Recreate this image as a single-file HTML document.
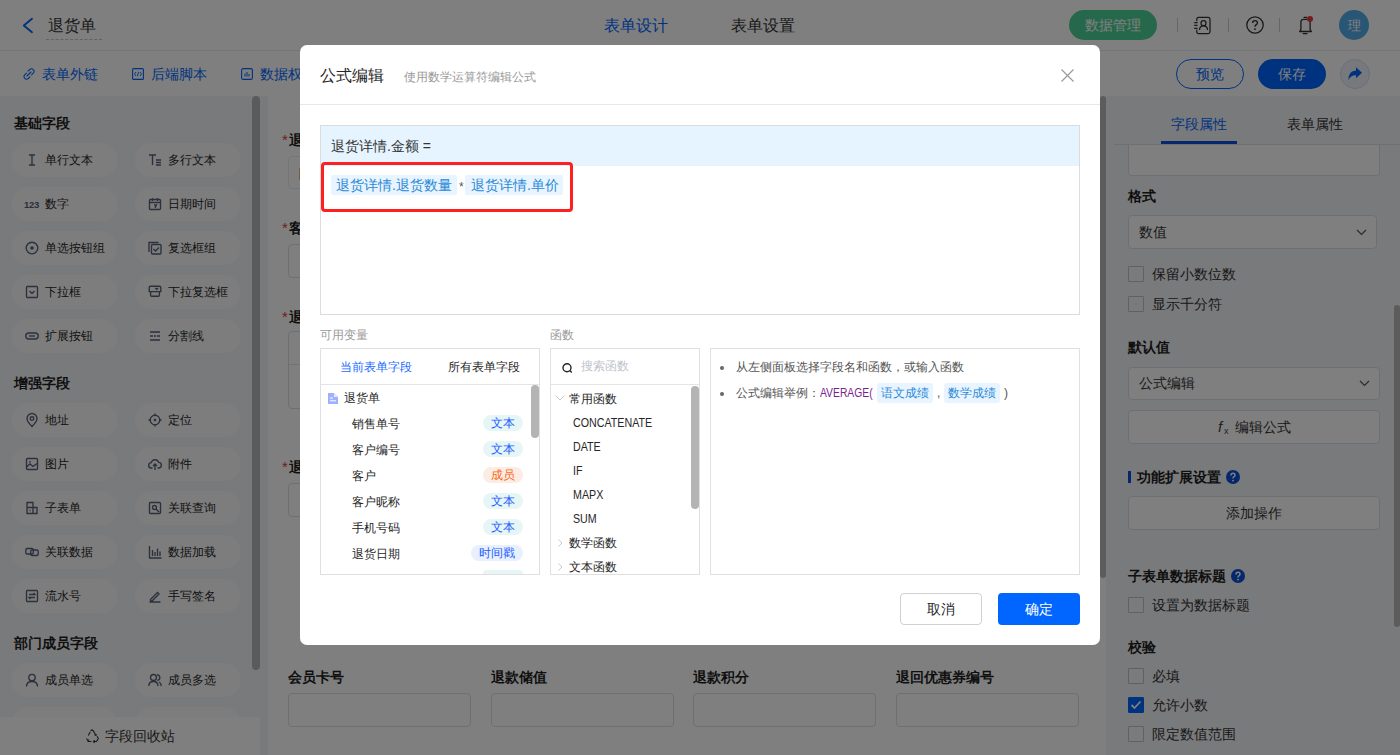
<!DOCTYPE html>
<html><head><meta charset="utf-8">
<style>
*{box-sizing:border-box;margin:0;padding:0}
html,body{width:1400px;height:755px;overflow:hidden;background:#fff}
body{font-family:"Liberation Sans",sans-serif;color:#262626;position:relative}
.a{position:absolute}
.t{position:absolute;white-space:nowrap;line-height:1}
svg{position:absolute;overflow:visible}
/* left panel */
.pill{position:absolute;width:105px;height:34px;border-radius:16px;background:#fafbfc}
.pill .t{left:33px;top:11px;font-size:12px;color:#262626}
.pill svg{left:13px;top:10px}
.sec{position:absolute;left:14px;font-size:14px;font-weight:bold;color:#1f1f1f;line-height:1}
.inp{position:absolute;border:1px solid #dcdfe6;border-radius:4px;background:#fff}
.lbl{position:absolute;font-size:14px;font-weight:bold;color:#1f1f1f;line-height:1;white-space:nowrap}
.star{color:#e03a3a;font-weight:normal;font-size:15px;margin-right:1px}

.cb{position:absolute;left:1128px;width:16px;height:16px;border:1px solid #bfc3cb;border-radius:1px;background:#f5f6f9}
.cbt{position:absolute;left:1152px;font-size:14px;color:#333;line-height:1;white-space:nowrap}
.btn{position:absolute;left:1128px;width:252px;height:34px;border:1px solid #dcdfe6;border-radius:4px;background:#fff}
</style></head><body>

<!-- ===== HEADER ===== -->
<div class="a" style="left:0;top:0;width:1400px;height:51px;background:#fff;border-bottom:1px solid #e8e8e8"></div>
<svg style="left:22px;top:18px" width="12" height="16" viewBox="0 0 12 16"><path d="M10 0.8 L1.8 7.5 L10 14.2" fill="none" stroke="#0066ff" stroke-width="1.9" stroke-linecap="round" stroke-linejoin="round"/></svg>
<div class="t" style="left:48px;top:18px;font-size:16px;color:#333">退货单</div>
<div class="a" style="left:46px;top:39px;width:56px;height:0;border-top:1px dashed #c4c4c4"></div>
<div class="t" style="left:604px;top:18px;font-size:16px;color:#0066ff">表单设计</div>
<div class="t" style="left:731px;top:18px;font-size:16px;color:#333">表单设置</div>
<div class="a" style="left:1069px;top:10px;width:88px;height:30px;border-radius:15px;background:#4dd196"></div>
<div class="t" style="left:1085px;top:18px;font-size:14px;color:#fff">数据管理</div>
<div class="a" style="left:1177px;top:18px;width:1px;height:14px;background:#ccc"></div>
<div class="a" style="left:1228px;top:18px;width:1px;height:14px;background:#ccc"></div>
<div class="a" style="left:1279px;top:18px;width:1px;height:14px;background:#ccc"></div>
<svg style="left:1193px;top:16px" width="18" height="18" viewBox="0 0 18 18"><path d="M3.8 5.2V3.2Q3.8 1.4 5.6 1.4H15.2Q17 1.4 17 3.2V15.8Q17 17.6 15.2 17.6H5.6Q3.8 17.6 3.8 15.8V13.8" fill="none" stroke="#333" stroke-width="1.25"/><path d="M1.2 6.5h3.4M1.2 9.4h3.4M1.2 12.4h3.4" stroke="#333" stroke-width="1.25"/><circle cx="10.5" cy="7.2" r="2.5" fill="none" stroke="#333" stroke-width="1.25"/><path d="M6.5 14Q6.5 9.8 10.5 9.8Q14.5 9.8 14.5 14" fill="none" stroke="#333" stroke-width="1.25"/></svg>
<svg style="left:1246px;top:16px" width="18" height="18" viewBox="0 0 18 18"><circle cx="9" cy="9" r="8.2" fill="none" stroke="#333" stroke-width="1.3"/><path d="M6.6 7 Q6.6 4.6 9 4.6 Q11.4 4.6 11.4 6.8 Q11.4 8.3 9.8 9 Q9 9.4 9 10.8" fill="none" stroke="#333" stroke-width="1.4"/><circle cx="9" cy="13.2" r="0.9" fill="#333"/></svg>
<svg style="left:1298px;top:16px" width="16" height="19" viewBox="0 0 16 19"><path d="M1.6 15.5L2.9 13.6V6Q2.9 3.3 5.6 3.3H9.4Q12.1 3.3 12.1 6V13.6L13.4 15.5Z" fill="none" stroke="#333" stroke-width="1.3" stroke-linejoin="round"/><path d="M6 1.3H8.6M5.2 17.6H9" stroke="#333" stroke-width="1.3" stroke-linecap="round"/><circle cx="12" cy="3" r="3" fill="#e83a3a"/></svg>
<div class="a" style="left:1339px;top:10px;width:30px;height:30px;border-radius:50%;background:#52ace8"></div>
<div class="t" style="left:1348px;top:19px;font-size:13px;color:#fff">理</div>

<!-- ===== TOOLBAR ===== -->
<svg style="left:23px;top:68px" width="12" height="12" viewBox="0 0 12 12"><path d="M5 3.2 L6.6 1.6 Q8.4 -0.2 10.2 1.6 Q12 3.4 10.2 5.2 L8.6 6.8 M7 8.8 L5.4 10.4 Q3.6 12.2 1.8 10.4 Q0 8.6 1.8 6.8 L3.4 5.2 M4 8 L8 4" fill="none" stroke="#0066ff" stroke-width="1.1" stroke-linecap="round"/></svg>
<div class="t" style="left:42px;top:67px;font-size:14px;color:#0066ff">表单外链</div>
<svg style="left:132px;top:68px" width="12" height="12" viewBox="0 0 12 12"><rect x="0.6" y="0.6" width="10.8" height="10.8" rx="1" fill="none" stroke="#0066ff" stroke-width="1.1"/><path d="M4 4 L2.5 6 L4 8 M8 4 L9.5 6 L8 8 M6.6 3.8 L5.4 8.2" fill="none" stroke="#0066ff" stroke-width="0.9"/></svg>
<div class="t" style="left:151px;top:67px;font-size:14px;color:#0066ff">后端脚本</div>
<svg style="left:241px;top:68px" width="12" height="12" viewBox="0 0 12 12"><rect x="0.6" y="0.6" width="10.8" height="10.8" rx="1.5" fill="none" stroke="#0066ff" stroke-width="1.1"/><path d="M4 5.5v3M6 4v4.5M8 6v2.5" stroke="#0066ff" stroke-width="1"/></svg>
<div class="t" style="left:260px;top:67px;font-size:14px;color:#0066ff">数据权限</div>
<div class="a" style="left:1176px;top:59px;width:68px;height:30px;border-radius:15px;border:1px solid #0066ff;background:#fff"></div>
<div class="t" style="left:1196px;top:67px;font-size:14px;color:#0066ff">预览</div>
<div class="a" style="left:1258px;top:59px;width:68px;height:30px;border-radius:15px;background:#0066ff"></div>
<div class="t" style="left:1278px;top:67px;font-size:14px;color:#fff">保存</div>
<div class="a" style="left:1340px;top:59px;width:30px;height:30px;border-radius:50%;border:1px solid #d6def0;background:#eef2fa"></div>
<svg style="left:1347px;top:67px" width="16" height="14" viewBox="0 0 16 14"><path d="M1.2 13.2 Q1.6 3.6 9 3.4 V0.3 L15 5.8 L9 11.2 V8.2 Q3.8 8 1.2 13.2Z" fill="#0066ff"/></svg>

<!-- ===== LEFT PANEL ===== -->
<div class="a" style="left:0;top:96px;width:268px;height:659px;background:#f3f4f7"></div>
<div id="leftpanel"><div class="sec" style="top:116px">基础字段</div>
<div class="sec" style="top:376px">增强字段</div>
<div class="sec" style="top:636px">部门成员字段</div>
<div class="pill" style="left:12px;top:143px"><svg width="14" height="14" viewBox="0 0 14 14"><path d="M4 2h6M4 12h6M7 2v10" fill="none" stroke="#566074" stroke-width="1.35" stroke-width="1.5"/></svg><div class="t">单行文本</div></div>
<div class="pill" style="left:135px;top:143px"><svg width="14" height="14" viewBox="0 0 14 14"><path d="M1 2h7M4.5 2v10M8 7h5M8 9.5h5M8 12h5" fill="none" stroke="#566074" stroke-width="1.35" stroke-width="1.3"/></svg><div class="t">多行文本</div></div>
<div class="pill" style="left:12px;top:187px"><div class="t" style="left:12px;top:13px;font-size:9.5px;font-weight:bold;color:#566074;letter-spacing:-0.3px">123</div><div class="t">数字</div></div>
<div class="pill" style="left:135px;top:187px"><svg width="14" height="14" viewBox="0 0 14 14"><rect x="1.5" y="2.5" width="11" height="10" rx="1" fill="none" stroke="#566074" stroke-width="1.35"/><path d="M1.5 5.5h11M4.5 1v3M9.5 1v3M6 8h2.5L7 11" fill="none" stroke="#566074" stroke-width="1.35"/></svg><div class="t">日期时间</div></div>
<div class="pill" style="left:12px;top:231px"><svg width="14" height="14" viewBox="0 0 14 14"><circle cx="7" cy="7" r="5.8" fill="none" stroke="#566074" stroke-width="1.35"/><circle cx="7" cy="7" r="1.8" fill="#566074"/></svg><div class="t">单选按钮组</div></div>
<div class="pill" style="left:135px;top:231px"><svg width="14" height="14" viewBox="0 0 14 14"><path d="M1 11V1.5h9.5" fill="none" stroke="#566074" stroke-width="1.35"/><rect x="3.5" y="3.5" width="9.5" height="9.5" rx="1" fill="none" stroke="#566074" stroke-width="1.35"/><path d="M5.5 8l2 2 3.5-3.5" fill="none" stroke="#566074" stroke-width="1.35"/></svg><div class="t">复选框组</div></div>
<div class="pill" style="left:12px;top:275px"><svg width="14" height="14" viewBox="0 0 14 14"><rect x="1.5" y="1.5" width="11" height="11" rx="1" fill="none" stroke="#566074" stroke-width="1.35"/><path d="M4.5 6l2.5 2.5L9.5 6" fill="none" stroke="#566074" stroke-width="1.35"/></svg><div class="t">下拉框</div></div>
<div class="pill" style="left:135px;top:275px"><svg width="14" height="14" viewBox="0 0 14 14"><path d="M1.2 6.6V2.5Q1.2 1.2 2.5 1.2H11.5Q12.8 1.2 12.8 2.5V6.6ZM2.6 6.6V10.2Q2.6 11.2 3.6 11.2H10.4Q11.4 11.2 11.4 10.2V6.6M7.3 3l1.4 1.3L10.1 3" fill="none" stroke="#566074" stroke-width="1.35"/></svg><div class="t">下拉复选框</div></div>
<div class="pill" style="left:12px;top:319px"><svg width="14" height="14" viewBox="0 0 14 14"><rect x="0.8" y="4" width="12.4" height="6" rx="3" fill="none" stroke="#566074" stroke-width="1.35" stroke-width="1.4"/><path d="M4 7h6" fill="none" stroke="#566074" stroke-width="1.35"/></svg><div class="t">扩展按钮</div></div>
<div class="pill" style="left:135px;top:319px"><svg width="14" height="14" viewBox="0 0 14 14"><path d="M2 3h10M2 7h3M6 7h2M9 7h3M2 11h10" fill="none" stroke="#566074" stroke-width="1.35"/></svg><div class="t">分割线</div></div>
<div class="pill" style="left:12px;top:403px"><svg width="14" height="14" viewBox="0 0 14 14"><path d="M7 13.5Q2 8.5 2 5.5A5 5 0 0 1 12 5.5Q12 8.5 7 13.5Z" fill="none" stroke="#566074" stroke-width="1.35"/><circle cx="7" cy="5.5" r="1.8" fill="none" stroke="#566074" stroke-width="1.35"/></svg><div class="t">地址</div></div>
<div class="pill" style="left:135px;top:403px"><svg width="14" height="14" viewBox="0 0 14 14"><circle cx="7" cy="7" r="4.8" fill="none" stroke="#566074" stroke-width="1.35"/><circle cx="7" cy="7" r="1.3" fill="#566074"/><path d="M7 0.5v2.5M7 11v2.5M0.5 7h2.5M11 7h2.5" fill="none" stroke="#566074" stroke-width="1.35"/></svg><div class="t">定位</div></div>
<div class="pill" style="left:12px;top:447px"><svg width="14" height="14" viewBox="0 0 14 14"><rect x="1.5" y="1.5" width="11" height="11" rx="1" fill="none" stroke="#566074" stroke-width="1.35"/><path d="M1.5 10l3.5-3 3 2.5 4-3" fill="none" stroke="#566074" stroke-width="1.35"/><circle cx="5" cy="4.8" r="0.9" fill="#566074"/></svg><div class="t">图片</div></div>
<div class="pill" style="left:135px;top:447px"><svg width="14" height="14" viewBox="0 0 14 14"><path d="M4.5 11H3.5A2.7 2.7 0 0 1 3.3 5.6A3.8 3.8 0 0 1 10.6 5.4A2.8 2.8 0 0 1 10.5 11H9.5M7 7v6M5 9l2-2 2 2" fill="none" stroke="#566074" stroke-width="1.35"/></svg><div class="t">附件</div></div>
<div class="pill" style="left:12px;top:491px"><svg width="14" height="14" viewBox="0 0 14 14"><path d="M2 1.5h6v11H2zM8 6.5h4v6H8M2 6.5h6M4.5 9.5h1" fill="none" stroke="#566074" stroke-width="1.35"/></svg><div class="t">子表单</div></div>
<div class="pill" style="left:135px;top:491px"><svg width="14" height="14" viewBox="0 0 14 14"><rect x="1.5" y="1.5" width="11" height="11" rx="1" fill="none" stroke="#566074" stroke-width="1.35"/><circle cx="6.5" cy="6.5" r="2" fill="none" stroke="#566074" stroke-width="1.35"/><path d="M8 8l3 3" fill="none" stroke="#566074" stroke-width="1.35"/></svg><div class="t">关联查询</div></div>
<div class="pill" style="left:12px;top:535px"><svg width="14" height="14" viewBox="0 0 14 14"><rect x="0.8" y="3.5" width="7.5" height="5.5" rx="1.5" fill="none" stroke="#566074" stroke-width="1.35"/><rect x="5.7" y="5" width="7.5" height="5.5" rx="1.5" fill="none" stroke="#566074" stroke-width="1.35"/></svg><div class="t">关联数据</div></div>
<div class="pill" style="left:135px;top:535px"><svg width="14" height="14" viewBox="0 0 14 14"><path d="M1.5 1v12h12M4.5 5v6M7 7v4M9.5 3.5v7.5M12 6.5v4.5" fill="none" stroke="#566074" stroke-width="1.35"/></svg><div class="t">数据加载</div></div>
<div class="pill" style="left:12px;top:579px"><svg width="14" height="14" viewBox="0 0 14 14"><rect x="1.5" y="1.5" width="11" height="11" rx="1" fill="none" stroke="#566074" stroke-width="1.35"/><path d="M4 5.5h6L8.5 4M10 8.5H4l1.5 1.5" fill="none" stroke="#566074" stroke-width="1.35"/></svg><div class="t">流水号</div></div>
<div class="pill" style="left:135px;top:579px"><svg width="14" height="14" viewBox="0 0 14 14"><path d="M2.5 10.5L9.5 3.5l1.5 1.5-7 7H2.5z M1.5 13h11" fill="none" stroke="#566074" stroke-width="1.35"/></svg><div class="t">手写签名</div></div>
<div class="pill" style="left:12px;top:663px"><svg width="14" height="14" viewBox="0 0 14 14"><circle cx="7" cy="4.5" r="3.2" fill="none" stroke="#566074" stroke-width="1.35" stroke-width="1.3"/><path d="M1.5 13.5Q1.5 8.5 7 8.5Q12.5 8.5 12.5 13.5" fill="none" stroke="#566074" stroke-width="1.35" stroke-width="1.3"/></svg><div class="t">成员单选</div></div>
<div class="pill" style="left:135px;top:663px"><svg width="14" height="14" viewBox="0 0 14 14"><circle cx="5.5" cy="4.5" r="3" fill="none" stroke="#566074" stroke-width="1.35" stroke-width="1.3"/><path d="M0.8 13Q0.8 8.5 5.5 8.5Q10 8.5 10 13M9 1.8A2.7 2.7 0 0 1 9.2 7.3M11 9Q13.2 10 13.2 13" fill="none" stroke="#566074" stroke-width="1.35" stroke-width="1.3"/></svg><div class="t">成员多选</div></div>
<div class="pill" style="left:12px;top:707px"><svg width="14" height="14" viewBox="0 0 14 14"><circle cx="7" cy="4.5" r="3.2" fill="none" stroke="#566074" stroke-width="1.35" stroke-width="1.3"/><path d="M1.5 13.5Q1.5 8.5 7 8.5Q12.5 8.5 12.5 13.5" fill="none" stroke="#566074" stroke-width="1.35" stroke-width="1.3"/></svg><div class="t">部门单选</div></div>
<div class="pill" style="left:135px;top:707px"><svg width="14" height="14" viewBox="0 0 14 14"><circle cx="5.5" cy="4.5" r="3" fill="none" stroke="#566074" stroke-width="1.35" stroke-width="1.3"/><path d="M0.8 13Q0.8 8.5 5.5 8.5Q10 8.5 10 13M9 1.8A2.7 2.7 0 0 1 9.2 7.3M11 9Q13.2 10 13.2 13" fill="none" stroke="#566074" stroke-width="1.35" stroke-width="1.3"/></svg><div class="t">部门多选</div></div>
<div class="a" style="left:252px;top:96px;width:8px;height:574px;border-radius:4px;background:#b6b6b6"></div>
<div class="a" style="left:0;top:717px;width:260px;height:38px;background:#fff"></div>
<svg style="left:85px;top:729px" width="14" height="14" viewBox="0 0 14 14"><path d="M5.5 2.2L7 0.8l1.5 1.4 2.3 4M11.8 5.5l-1 .8-1.3-.5M3.2 6.5l2-3.6M1.5 9.5l2 3h3M4 10.5L2.5 12.5M9 12.5h2.5l1.8-3-1.3-2.2M9.5 11l-1 1.5 1 1.3" fill="none" stroke="#333" stroke-width="1.1"/></svg>
<div class="t" style="left:105px;top:729px;font-size:14px;color:#333">字段回收站</div></div><!--/left-->

<!-- ===== CENTER CANVAS ===== -->
<div id="canvas"><div class="a" style="left:1100px;top:96px;width:6px;height:482px;border-radius:3px;background:#b9b9b9"></div>
<div class="lbl" style="left:282px;top:132px"><span class="star">*</span>退货详情</div>
<div class="inp" style="left:288px;top:156px;width:300px;height:33px;border-color:#ececec"></div>
<div class="a" style="left:299px;top:168px;width:1px;height:12px;background:#f5b070"></div>
<div class="lbl" style="left:282px;top:220px"><span class="star">*</span>客户</div>
<div class="inp" style="left:288px;top:244px;width:300px;height:34px"></div>
<div class="lbl" style="left:282px;top:309px"><span class="star">*</span>退货明细</div>
<div class="inp" style="left:288px;top:331px;width:300px;height:78px"></div>
<div class="a" style="left:289px;top:364px;width:300px;height:1px;background:#e4e6eb"></div>
<div class="lbl" style="left:282px;top:459px"><span class="star">*</span>退款方式</div>
<div class="inp" style="left:288px;top:483px;width:300px;height:34px"></div>
<div class="lbl" style="left:288px;top:670px">会员卡号</div>
<div class="inp" style="left:288px;top:693px;width:183px;height:34px"></div>
<div class="lbl" style="left:491px;top:670px">退款储值</div>
<div class="inp" style="left:491px;top:693px;width:183px;height:34px"></div>
<div class="lbl" style="left:693px;top:670px">退款积分</div>
<div class="inp" style="left:693px;top:693px;width:183px;height:34px"></div>
<div class="lbl" style="left:896px;top:670px">退回优惠券编号</div>
<div class="inp" style="left:896px;top:693px;width:183px;height:34px"></div></div><!--/canvas-->

<!-- ===== RIGHT PANEL ===== -->
<div class="a" style="left:1106px;top:96px;width:294px;height:659px;background:#f3f4f7"></div>
<div id="rightpanel"><div class="t" style="left:1171px;top:117px;font-size:14px;color:#0066ff">字段属性</div>
<div class="t" style="left:1287px;top:117px;font-size:14px;color:#333">表单属性</div>
<div class="inp" style="left:1128px;top:145px;width:252px;height:31px;border-top:none;border-radius:0 0 4px 4px;background:#fff"></div>
<div class="a" style="left:1114px;top:144px;width:286px;height:1px;background:#dfe1e6"></div>
<div class="a" style="left:1161px;top:141px;width:76px;height:3px;background:#0a4fd6"></div>
<div class="lbl" style="left:1128px;top:189px">格式</div>
<div class="inp" style="left:1128px;top:215px;width:249px;height:34px;background:#fff"></div>
<div class="t" style="left:1139px;top:225px;font-size:14px;color:#333">数值</div>
<svg style="left:1356px;top:229px" width="11" height="7" viewBox="0 0 11 7"><path d="M1 1l4.5 4.5L10 1" fill="none" stroke="#555" stroke-width="1.2"/></svg>
<div class="cb" style="top:266px"></div>
<div class="cbt" style="top:267px">保留小数位数</div>
<div class="cb" style="top:296px"></div>
<div class="cbt" style="top:297px">显示千分符</div>
<div class="cb" style="top:597px"></div>
<div class="cbt" style="top:598px">设置为数据标题</div>
<div class="cb" style="top:668px"></div>
<div class="cbt" style="top:669px">必填</div>
<div class="cb" style="top:697px;background:#0066ff;border-color:#0066ff"></div>
<svg style="left:1130px;top:700px" width="12" height="10" viewBox="0 0 12 10"><path d="M1.5 5l3 3 6-6.5" fill="none" stroke="#fff" stroke-width="1.8"/></svg>
<div class="cbt" style="top:698px">允许小数</div>
<div class="cb" style="top:726px"></div>
<div class="cbt" style="top:727px">限定数值范围</div>
<div class="lbl" style="left:1128px;top:340px">默认值</div>
<div class="inp" style="left:1128px;top:367px;width:252px;height:33px;background:#fff"></div>
<div class="t" style="left:1139px;top:376px;font-size:14px;color:#333">公式编辑</div>
<svg style="left:1359px;top:380px" width="11" height="7" viewBox="0 0 11 7"><path d="M1 1l4.5 4.5L10 1" fill="none" stroke="#555" stroke-width="1.2"/></svg>
<div class="btn" style="top:410px"></div>
<div class="t" style="left:1218px;top:419px;font-size:15px;color:#444;font-family:'Liberation Sans',sans-serif;font-style:italic">f</div>
<div class="t" style="left:1224px;top:427px;font-size:9px;color:#444">x</div>
<div class="t" style="left:1235px;top:420px;font-size:14px;color:#333">编辑公式</div>
<div class="a" style="left:1128px;top:471px;width:3px;height:12px;background:#0a4fd6"></div>
<div class="lbl" style="left:1137px;top:470px">功能扩展设置</div>
<svg style="left:1226px;top:470px" width="14" height="14" viewBox="0 0 14 14"><circle cx="7" cy="7" r="7" fill="#0a4fd6"/><path d="M5 5.5Q5 3.3 7 3.3Q9 3.3 9 5.2Q9 6.3 7.8 6.9Q7 7.3 7 8.5" fill="none" stroke="#fff" stroke-width="1.5"/><circle cx="7" cy="10.6" r="0.95" fill="#fff"/></svg>
<div class="btn" style="top:496px"></div>
<div class="t" style="left:1226px;top:506px;font-size:14px;color:#333">添加操作</div>
<div class="lbl" style="left:1128px;top:569px">子表单数据标题</div>
<svg style="left:1231px;top:569px" width="14" height="14" viewBox="0 0 14 14"><circle cx="7" cy="7" r="7" fill="#0a4fd6"/><path d="M5 5.5Q5 3.3 7 3.3Q9 3.3 9 5.2Q9 6.3 7.8 6.9Q7 7.3 7 8.5" fill="none" stroke="#fff" stroke-width="1.5"/><circle cx="7" cy="10.6" r="0.95" fill="#fff"/></svg>
<div class="lbl" style="left:1128px;top:640px">校验</div>
<div class="a" style="left:1394px;top:305px;width:6px;height:322px;border-radius:3px;background:#b9b9b9"></div></div><!--/right-->

<!-- ===== OVERLAY ===== -->
<div class="a" style="left:0;top:0;width:1400px;height:755px;background:rgba(0,0,0,0.5)"></div>

<!-- ===== MODAL ===== -->
<div class="a" style="left:300px;top:45px;width:800px;height:600px;background:#fff;border-radius:7px"></div>
<div id="modal"><div class="t" style="left:320px;top:68px;font-size:16px;color:#262626">公式编辑</div>
<div class="t" style="left:404px;top:71px;font-size:12px;color:#999">使用数学运算符编辑公式</div>
<svg style="left:1061px;top:69px" width="13" height="13" viewBox="0 0 13 13"><path d="M0.5 0.5L12.5 12.5M12.5 0.5L0.5 12.5" stroke="#999" stroke-width="1.2"/></svg>
<div class="a" style="left:300px;top:104px;width:800px;height:1px;background:#e8e8e8"></div>
<div class="a" style="left:320px;top:125px;width:760px;height:190px;border:1px solid #dcdcdc;background:#fff"></div>
<div class="a" style="left:321px;top:126px;width:758px;height:40px;background:#e5f4ff"></div>
<div class="t" style="left:331px;top:139px;font-size:14px;color:#333">退货详情.金额 =</div>
<div class="a" style="left:331px;top:175px;width:126px;height:20px;border-radius:2px;background:#e8f4ff"></div>
<div class="t" style="left:336px;top:178px;font-size:14px;color:#2b8ad6">退货详情.退货数量</div>
<div class="t" style="left:459px;top:181px;font-size:12px;color:#555">*</div>
<div class="a" style="left:465px;top:175px;width:98px;height:20px;border-radius:2px;background:#e8f4ff"></div>
<div class="t" style="left:471px;top:178px;font-size:14px;color:#2b8ad6">退货详情.单价</div>
<div class="a" style="left:321px;top:162px;width:252px;height:50px;border:3px solid #ff1f1f;border-radius:4px"></div>
<div class="t" style="left:320px;top:329px;font-size:12px;color:#999">可用变量</div>
<div class="t" style="left:550px;top:329px;font-size:12px;color:#999">函数</div>
<div class="a" style="left:320px;top:348px;width:220px;height:227px;border:1px solid #e0e0e0;overflow:hidden" id="vp"></div>
<div class="a" style="left:321px;top:384px;width:218px;height:1px;background:#e4e4e4"></div>
<div class="t" style="left:340px;top:361px;font-size:12px;color:#1a6cff">当前表单字段</div>
<div class="t" style="left:448px;top:361px;font-size:12px;color:#262626">所有表单字段</div>
<svg style="left:328px;top:393px" width="10" height="11" viewBox="0 0 10 11"><path d="M0 0h6L10 4V11H0z" fill="#9fb0ff"/><path d="M6 0V4H10" fill="#e4e9ff"/><path d="M2 5h3M2 7.8h6" stroke="#fff" stroke-width="1"/></svg>
<div class="t" style="left:344px;top:392px;font-size:12px;color:#262626">退货单</div>
<div class="t" style="left:352px;top:418px;font-size:12px;color:#262626">销售单号</div>
<div class="a" style="left:483px;top:415px;width:40px;height:16px;border-radius:8px;background:#e6f6f6"></div>
<div class="t" style="left:491px;top:417px;font-size:12px;color:#1f5cff">文本</div>
<div class="t" style="left:352px;top:444px;font-size:12px;color:#262626">客户编号</div>
<div class="a" style="left:483px;top:441px;width:40px;height:16px;border-radius:8px;background:#e6f6f6"></div>
<div class="t" style="left:491px;top:443px;font-size:12px;color:#1f5cff">文本</div>
<div class="t" style="left:352px;top:470px;font-size:12px;color:#262626">客户</div>
<div class="a" style="left:483px;top:467px;width:40px;height:16px;border-radius:8px;background:#fdece3"></div>
<div class="t" style="left:491px;top:469px;font-size:12px;color:#f56a1a">成员</div>
<div class="t" style="left:352px;top:496px;font-size:12px;color:#262626">客户昵称</div>
<div class="a" style="left:483px;top:493px;width:40px;height:16px;border-radius:8px;background:#e6f6f6"></div>
<div class="t" style="left:491px;top:495px;font-size:12px;color:#1f5cff">文本</div>
<div class="t" style="left:352px;top:522px;font-size:12px;color:#262626">手机号码</div>
<div class="a" style="left:483px;top:519px;width:40px;height:16px;border-radius:8px;background:#e6f6f6"></div>
<div class="t" style="left:491px;top:521px;font-size:12px;color:#1f5cff">文本</div>
<div class="t" style="left:352px;top:548px;font-size:12px;color:#262626">退货日期</div>
<div class="a" style="left:471px;top:545px;width:52px;height:16px;border-radius:8px;background:#e8f0fe"></div>
<div class="t" style="left:479px;top:547px;font-size:12px;color:#1f5cff">时间戳</div>
<div class="a" style="left:483px;top:570px;width:40px;height:4px;border-radius:8px 8px 0 0;background:#e6f6f6"></div>
<div class="a" style="left:531px;top:385px;width:8px;height:53px;border-radius:4px;background:#b4b4b4"></div>
<div class="a" style="left:550px;top:348px;width:150px;height:227px;border:1px solid #e0e0e0"></div>
<div class="a" style="left:551px;top:384px;width:148px;height:1px;background:#e4e4e4"></div>
<svg style="left:562px;top:363px" width="11" height="10" viewBox="0 0 11 10"><circle cx="5" cy="4.8" r="4" fill="none" stroke="#262626" stroke-width="1.4"/><path d="M7.8 7.6L9.8 9.6" stroke="#262626" stroke-width="1.4"/></svg>
<div class="t" style="left:581px;top:360px;font-size:12px;color:#c0c4cc">搜索函数</div>
<svg style="left:555px;top:395px" width="10" height="6" viewBox="0 0 10 6"><path d="M0.5 0.5L5 5L9.5 0.5" fill="none" stroke="#c8c8d4" stroke-width="1"/></svg>
<div class="t" style="left:569px;top:393px;font-size:12px;color:#262626">常用函数</div>
<div class="t" style="left:573px;top:417px;font-size:12px;color:#262626;transform:scaleX(0.89);transform-origin:0 0">CONCATENATE</div>
<div class="t" style="left:573px;top:441px;font-size:12px;color:#262626;transform:scaleX(0.89);transform-origin:0 0">DATE</div>
<div class="t" style="left:573px;top:465px;font-size:12px;color:#262626;transform:scaleX(0.89);transform-origin:0 0">IF</div>
<div class="t" style="left:573px;top:489px;font-size:12px;color:#262626;transform:scaleX(0.89);transform-origin:0 0">MAPX</div>
<div class="t" style="left:573px;top:513px;font-size:12px;color:#262626;transform:scaleX(0.89);transform-origin:0 0">SUM</div>
<svg style="left:558px;top:539px" width="5" height="8" viewBox="0 0 5 8"><path d="M0.5 0.5L4 4L0.5 7.5" fill="none" stroke="#c8c8d4" stroke-width="1"/></svg>
<div class="t" style="left:569px;top:537px;font-size:12px;color:#262626;height:37px;overflow:hidden">数学函数</div>
<svg style="left:558px;top:563px" width="5" height="8" viewBox="0 0 5 8"><path d="M0.5 0.5L4 4L0.5 7.5" fill="none" stroke="#c8c8d4" stroke-width="1"/></svg>
<div class="t" style="left:569px;top:561px;font-size:12px;color:#262626;height:13px;overflow:hidden">文本函数</div>
<div class="a" style="left:691px;top:386px;width:8px;height:123px;border-radius:4px;background:#b4b4b4"></div>
<div class="a" style="left:710px;top:348px;width:370px;height:227px;border:1px solid #e0e0e0"></div>
<div class="a" style="left:720px;top:366px;width:4px;height:4px;border-radius:2px;background:#666"></div>
<div class="t" style="left:736px;top:361px;font-size:12px;color:#555">从左侧面板选择字段名和函数，或输入函数</div>
<div class="a" style="left:720px;top:392px;width:4px;height:4px;border-radius:2px;background:#666"></div>
<div class="t" style="left:736px;top:387px;font-size:12px;color:#555">公式编辑举例：</div>
<div class="t" style="left:820px;top:387px;font-size:12px;color:#7a1f8f;transform:scaleX(0.86);transform-origin:0 0">AVERAGE(</div>
<div class="a" style="left:877px;top:383px;width:56px;height:20px;border-radius:3px;background:#e8f4ff"></div>
<div class="t" style="left:881px;top:387px;font-size:12px;color:#2b8ad6">语文成绩</div>
<div class="t" style="left:937px;top:387px;font-size:12px;color:#555">,</div>
<div class="a" style="left:944px;top:383px;width:56px;height:20px;border-radius:3px;background:#e8f4ff"></div>
<div class="t" style="left:948px;top:387px;font-size:12px;color:#2b8ad6">数学成绩</div>
<div class="t" style="left:1004px;top:387px;font-size:12px;color:#555">)</div>
<div class="a" style="left:900px;top:593px;width:82px;height:32px;border:1px solid #d0d0d0;border-radius:4px;background:#fff"></div>
<div class="t" style="left:927px;top:602px;font-size:14px;color:#262626">取消</div>
<div class="a" style="left:998px;top:593px;width:82px;height:32px;border-radius:4px;background:#0066ff"></div>
<div class="t" style="left:1025px;top:602px;font-size:14px;color:#fff;font-weight:500">确定</div></div><!--/modal-->

</body></html>
